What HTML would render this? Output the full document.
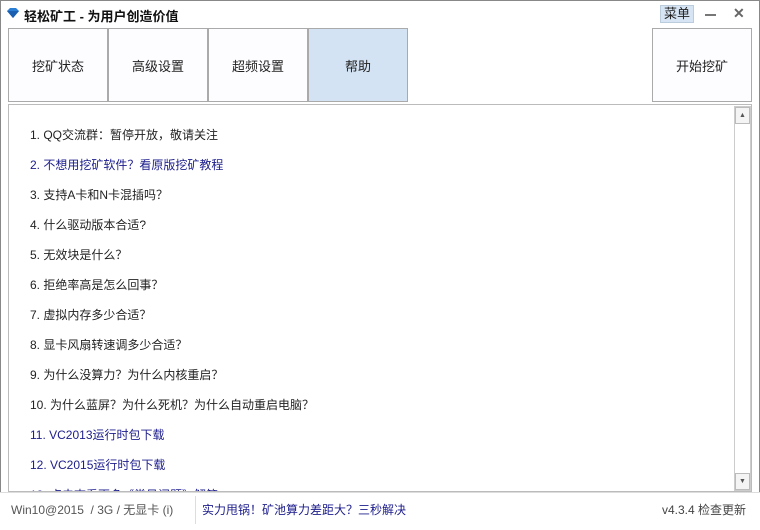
<!DOCTYPE html>
<html><head><meta charset="utf-8"><style>
*{margin:0;padding:0;box-sizing:border-box}
body{width:760px;height:530px;background:#fff;font-family:"Liberation Sans","Microsoft YaHei","Noto Sans CJK SC",sans-serif;font-size:12px;color:#222;position:relative;overflow:hidden}
.win{position:absolute;left:0;top:0;width:760px;height:530px;border:1px solid #888}
.title{position:absolute;left:24px;top:6px;font-size:13px;font-weight:bold;color:#111}
.btn{position:absolute;top:28px;height:74px;border:1px solid #aaa;background:#fdfcff;display:flex;align-items:center;justify-content:center;font-size:13px;color:#222}
.content{position:absolute;left:8px;top:104px;width:744px;height:388px;border:1px solid #bbb;overflow:hidden}
.item{position:absolute;left:21px;font-size:12px;white-space:nowrap}
.blue{color:#1c1c8c}
.sb{position:absolute;left:725px;top:1px;width:17px;height:385px;border:1px solid #ccc;background:#fff}
.sbt{position:absolute;left:0;width:15px;height:17px;border:1px solid #bbb;background:#f4f4f4;font-size:7px;color:#555;text-align:center;line-height:15px}
.status{position:absolute;top:501px;font-size:12px}
</style></head><body>
<div class="win"></div>
<svg style="position:absolute;left:6px;top:7px" width="14" height="12" viewBox="0 0 14 12"><path d="M1 4 L4 1 H10 L13 4 L7 11 Z" fill="#2a7fd4"/><path d="M1 4 H13 L7 11Z" fill="#1a5fb0"/></svg>
<div class="title">轻松矿工 - 为用户创造价值</div>
<div style="position:absolute;left:660px;top:5px;width:34px;height:18px;background:#d6e4f3;border:1px solid #bcd;font-size:13px;text-align:center;line-height:16px">菜单</div>
<div style="position:absolute;left:705px;top:14px;width:11px;height:2px;background:#777"></div>
<div style="position:absolute;left:733px;top:5px;font-size:14px;color:#666;font-weight:bold">✕</div>
<div class="btn" style="left:8px;width:100px">挖矿状态</div>
<div class="btn" style="left:108px;width:100px">高级设置</div>
<div class="btn" style="left:208px;width:100px">超频设置</div>
<div class="btn" style="left:308px;width:100px;background:#d3e3f3">帮助</div>
<div class="btn" style="left:652px;width:100px">开始挖矿</div>
<div class="content">
<div class="item" style="top:21px">1. QQ交流群：暂停开放，敬请关注</div>
<div class="item blue" style="top:51px">2. 不想用挖矿软件？看原版挖矿教程</div>
<div class="item" style="top:81px">3. 支持A卡和N卡混插吗？</div>
<div class="item" style="top:111px">4. 什么驱动版本合适?</div>
<div class="item" style="top:141px">5. 无效块是什么？</div>
<div class="item" style="top:171px">6. 拒绝率高是怎么回事？</div>
<div class="item" style="top:201px">7. 虚拟内存多少合适？</div>
<div class="item" style="top:231px">8. 显卡风扇转速调多少合适？</div>
<div class="item" style="top:261px">9. 为什么没算力？为什么内核重启？</div>
<div class="item" style="top:291px">10. 为什么蓝屏？为什么死机？为什么自动重启电脑？</div>
<div class="item blue" style="top:321px">11. VC2013运行时包下载</div>
<div class="item blue" style="top:351px">12. VC2015运行时包下载</div>
<div class="item blue" style="top:381px">13. 点击查看更多《常见问题》解答</div>
<div class="sb"><div class="sbt" style="top:0">▲</div><div style="position:absolute;left:0;top:17px;width:15px;height:343px;background:#fff"></div><div class="sbt" style="bottom:0">▼</div></div>
</div>
<div style="position:absolute;left:0;top:492px;width:760px;height:38px;background:#fff;border-top:1px solid #ddd"></div>
<div class="status" style="left:11px;color:#555">Win10@2015 &nbsp;/ 3G / 无显卡 (i)</div>
<div style="position:absolute;left:195px;top:496px;width:1px;height:28px;background:#ddd"></div>
<div class="status blue" style="left:202px">实力甩锅！矿池算力差距大？三秒解决</div>
<div class="status" style="left:662px;color:#444">v4.3.4 检查更新</div>
</body></html>
